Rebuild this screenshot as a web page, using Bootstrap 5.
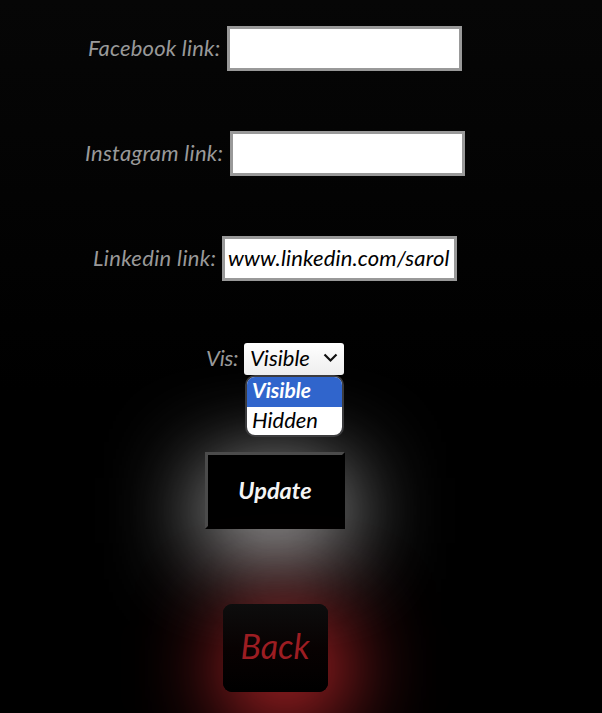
<!DOCTYPE html>
<html lang="en" data-bs-theme="dark">
<head>
<meta charset="utf-8">
<meta name="viewport" content="width=device-width, initial-scale=1">
<title>Edit links</title>
<link href="https://cdn.jsdelivr.net/npm/bootstrap@5.3.0/dist/css/bootstrap.min.css" rel="stylesheet">
<style>
body{height:713px;overflow:hidden;background:linear-gradient(#060606,#000 55%);font-family:Lato,sans-serif;font-style:italic;font-size:22px;line-height:30px;color:#999}
.profile-form{width:550px;padding-top:26px}
.field-row{height:45px;margin-bottom:60px;white-space:nowrap}
.field-row label{margin-right:7px;padding-bottom:2px}
.link-input{width:235px;height:45px;padding:0 2px 2px 3px;background:#fff;border:3px solid #999;border-radius:0;color:#000;font-style:italic;font-size:22px;letter-spacing:.15px}
.fb{width:132px;letter-spacing:.2px}
.ig{width:138px;letter-spacing:.3px}
.li{width:122px;letter-spacing:.35px}
.vis-row{height:31px;margin-top:2px}
.vis-row label{width:32px;margin-right:6px;padding-bottom:2px;letter-spacing:-.2px}
.vis-select{width:100px;height:32px;padding:0 6px 2px;background:linear-gradient(#fff,#eee);border-radius:3px;color:#000}
.vis-menu{left:1px;top:32px;width:99px;height:62px;border:2px solid #3c3c3e;border-radius:10px;background:#fff;color:#000;z-index:3}
.vis-menu div{height:30px;padding-left:5px;line-height:26px}
.vis-menu .picked{background:#3065cc;color:#fff;font-weight:700;font-size:21px}
.update-btn{width:140px;height:77px;margin-top:78px;padding-bottom:3px;background:#000;border:3px outset #000;border-color:#4b4b4b #000 #000 #4b4b4b;color:#f4f4f4;font-style:italic;font-weight:700;font-size:23.5px;box-shadow:0 20px 92px #d8d8d8}
.back-btn{width:105px;height:88px;margin-top:75px;padding-bottom:4px;border-radius:9px;background:linear-gradient(#0d0d0d,#080202 50%,#000);color:#9c1d22;font-size:34px;box-shadow:10px 20px 92px 2px #ee3035}
</style>
<script src="https://cdn.jsdelivr.net/npm/bootstrap@5.3.0/dist/js/bootstrap.bundle.min.js"></script>
</head>
<body>
<form class="profile-form d-flex flex-column align-items-center">
  <div class="field-row d-flex align-items-center"><label class="fb" for="facebook">Facebook link:</label><input class="link-input" id="facebook" type="text"></div>
  <div class="field-row d-flex align-items-center"><label class="ig" for="instagram">Instagram link:</label><input class="link-input" id="instagram" type="text"></div>
  <div class="field-row d-flex align-items-center"><label class="li" for="linkedin">Linkedin link:</label><input class="link-input" id="linkedin" type="text" value="www.linkedin.com/sarol"></div>
  <div class="vis-row d-flex align-items-center">
    <label>Vis:</label>
    <div class="vis-select position-relative d-flex align-items-center justify-content-between">
      <span>Visible</span>
      <svg width="15" height="10" viewBox="0 0 15 10" fill="none" stroke="#111" stroke-width="2.2"><path d="M1.5 1.5 7.5 7.5 13.5 1.5"/></svg>
      <div class="vis-menu position-absolute overflow-hidden"><div class="picked">Visible</div><div>Hidden</div></div>
    </div>
  </div>
  <button class="update-btn" type="button">Update</button>
  <a class="back-btn d-flex align-items-center justify-content-center text-decoration-none" href="#">Back</a>
</form>
</body>
</html>
